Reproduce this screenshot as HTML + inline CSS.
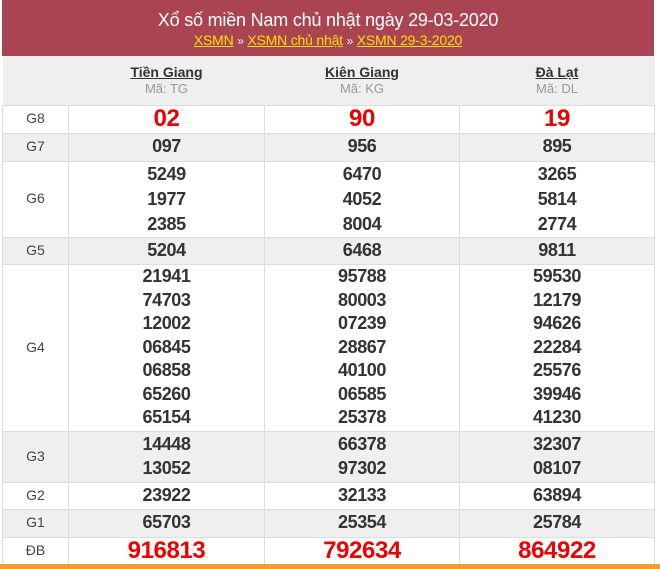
<!DOCTYPE html>
<html><head><meta charset="utf-8"><style>
*{margin:0;padding:0;box-sizing:border-box}
body{width:660px;height:569px;background:#fff;font-family:"Liberation Sans",Arial,sans-serif;position:relative;overflow:hidden}
#hd{position:absolute;left:2px;top:0;width:652px;height:56px;background:#ab4452;color:#fff;text-align:center}
#hd .t{font-size:18px;line-height:22px;padding-top:9px;letter-spacing:-0.2px}
#hd .l{font-size:14px;line-height:18px;color:#ffe000;letter-spacing:-0.2px}
#hd .l u{color:#ffe000}
#hd .l span{color:#fff;font-size:12px}
table{position:absolute;left:2px;top:56px;width:652px;border-collapse:collapse;table-layout:fixed}
td{border:1px solid #ddd;text-align:center;vertical-align:middle;color:#333;font-weight:bold;font-size:18px;line-height:23.5px;letter-spacing:-0.4px}
td.g{font-weight:normal;font-size:14px;color:#444;letter-spacing:0}
tr.gr td{background:#efefef}
.r{color:#e00;font-size:24px}
.h td{background:#efefef;border:none;border-bottom:1px solid #ddd;font-size:14px;line-height:16px;letter-spacing:0}
.h u{font-weight:bold;color:#333}
.h .m{font-weight:normal;color:#999;font-size:13px}
#ob{position:absolute;left:0;top:564px;width:660px;height:5px;background:#f49a30}
</style></head><body>
<div id="hd"><div class="t">Xổ số miền Nam chủ nhật ngày 29-03-2020</div>
<div class="l"><u>XSMN</u> <span>»</span> <u>XSMN chủ nhật</u> <span>»</span> <u>XSMN 29-3-2020</u></div></div>
<table>
<colgroup><col style="width:66px"><col style="width:196px"><col style="width:195px"><col style="width:195px"></colgroup>
<tr class="h" style="height:49px"><td></td><td><u>Tiền Giang</u><br><span class="m">Mã: TG</span></td><td><u>Kiên Giang</u><br><span class="m">Mã: KG</span></td><td><u>Đà Lạt</u><br><span class="m">Mã: DL</span></td></tr>
<tr style="height:28px"><td class="g">G8</td><td class="r">02</td><td class="r">90</td><td class="r">19</td></tr>
<tr class="gr" style="height:28px"><td class="g">G7</td><td>097</td><td>956</td><td>895</td></tr>
<tr style="height:75px"><td class="g">G6</td><td style="line-height:25px">5249<br>1977<br>2385</td><td style="line-height:25px">6470<br>4052<br>8004</td><td style="line-height:25px">3265<br>5814<br>2774</td></tr>
<tr class="gr" style="height:27px"><td class="g">G5</td><td>5204</td><td>6468</td><td>9811</td></tr>
<tr style="height:167px"><td class="g">G4</td><td>21941<br>74703<br>12002<br>06845<br>06858<br>65260<br>65154</td><td>95788<br>80003<br>07239<br>28867<br>40100<br>06585<br>25378</td><td>59530<br>12179<br>94626<br>22284<br>25576<br>39946<br>41230</td></tr>
<tr class="gr" style="height:51px"><td class="g">G3</td><td>14448<br>13052</td><td>66378<br>97302</td><td>32307<br>08107</td></tr>
<tr style="height:27px"><td class="g">G2</td><td>23922</td><td>32133</td><td>63894</td></tr>
<tr class="gr" style="height:28px"><td class="g">G1</td><td>65703</td><td>25354</td><td>25784</td></tr>
<tr style="height:28px"><td class="g">ĐB</td><td class="r">916813</td><td class="r">792634</td><td class="r">864922</td></tr>
</table>
<div id="ob"></div>
</body></html>
